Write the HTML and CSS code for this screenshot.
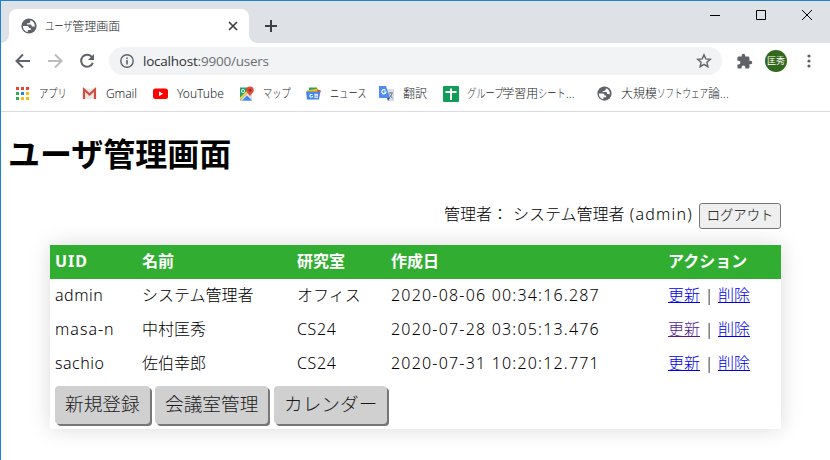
FILE: index.html
```html
<!DOCTYPE html>
<html lang="ja">
<head>
<meta charset="utf-8">
<title>ユーザ管理画面</title>
<link rel="stylesheet" href="styles.css">
</head>
<body>
<svg width="0" height="0" class="defs"><defs>
<symbol id="globe" viewBox="0 0 16 16"><circle cx="8" cy="8" r="7.6" fill="#5f6368"/><path d="M2 8.100h4.300c1.500 0 1.700 1 1.700 2h1.700v1.800H6.800v2.200C4 13.800 1.800 11.300 2 8.100zM9.300 2.300v1.200c0 1-.6 1.700-1.700 1.700H6v1.300h3.500c1 0 1.300 1 1.300 2h1.500c.8 0 1 .4 1.200.8.8-2.800-.6-6-4.200-7z" fill="#fff"/></symbol>
</defs></svg>
<div class="window">
  <header class="tabs">
    <div class="tab">
      <svg class="favicon"><use href="#globe"/></svg>
      <span class="title"><span class="kana k3">ユーザ</span>管理画面</span>
      <svg class="close" viewBox="0 0 10 10"><path d="M1 1l8 8M9 1L1 9" stroke="#3c4043" stroke-width="1.700"/></svg>
    </div>
    <svg class="plus" viewBox="0 0 12 12"><path d="M6 0v12M0 6h12" stroke="#3c4043" stroke-width="2"/></svg>
    <div class="controls">
      <svg viewBox="0 0 10 10"><path d="M0 5.500h10" stroke="#000"/></svg>
      <svg viewBox="0 0 10 10"><path d="M.5.5h9v9h-9z" stroke="#000" fill="none"/></svg>
      <svg viewBox="0 0 10 10"><path d="M0 0l10 10M10 0L0 10" stroke="#000"/></svg>
    </div>
  </header>
  <div class="toolbar">
    <svg class="nav" viewBox="0 0 16 16"><path d="M15 8H2M8 1.500L1.500 8 8 14.500" fill="none" stroke="#5f6368" stroke-width="2"/></svg>
    <svg class="nav" viewBox="0 0 16 16"><path d="M1 8h13M8 1.500L14.500 8 8 14.500" fill="none" stroke="#babcbe" stroke-width="2"/></svg>
    <svg class="nav" viewBox="0 0 16 16"><path d="M13 4.200A6 6 0 1 0 13.800 9.800" fill="none" stroke="#5f6368" stroke-width="2"/><path d="M15 1v6H9z" fill="#5f6368"/></svg>
    <div class="omnibox">
      <svg class="info" viewBox="0 0 14 14"><circle cx="7" cy="7" r="6.200" fill="none" stroke="#5f6368" stroke-width="1.400"/><path d="M7 6v4.500M7 3.400V5" stroke="#5f6368" stroke-width="1.600"/></svg>
      <span class="url"><b>localhost</b>:9900/users</span>
      <svg class="star" viewBox="0 0 16 16"><path d="M8 1.800l1.800 4.100 4.500.4-3.400 3 1 4.400L8 11.400l-3.900 2.300 1-4.400-3.400-3 4.500-.4z" fill="none" stroke="#5f6368" stroke-width="1.400"/></svg>
    </div>
    <svg class="ext" viewBox="0 0 24 24"><path d="M20.500 11H19V7c0-1.100-.9-2-2-2h-4V3.500a2.500 2.500 0 0 0-5 0V5H4c-1.100 0-2 .9-2 2v3.800h1.500a2.700 2.700 0 0 1 0 5.400H2V20c0 1.100.9 2 2 2h3.800v-1.500a2.700 2.700 0 0 1 5.400 0V22H17c1.100 0 2-.9 2-2v-4h1.500a2.500 2.500 0 0 0 0-5z" fill="#5f6368"/></svg>
    <span class="avatar">匡秀</span>
    <svg class="menu" viewBox="0 0 4 14"><g fill="#5f6368"><circle cx="2" cy="2" r="1.600"/><circle cx="2" cy="7" r="1.600"/><circle cx="2" cy="12" r="1.600"/></g></svg>
  </div>
  <nav class="bookmarks">
    <a class="bm b1"><svg viewBox="0 0 15 15"><path d="M1 1h3v3H1zM6 1h3v3H6zM11 1h3v3h-3z" fill="#ea4335"/><path d="M1 6h3v3H1zM1 11h3v3H1z" fill="#34a853"/><path d="M6 6h3v3H6z" fill="#1a88f0"/><path d="M11 6h3v3h-3zM6 11h3v3H6zM11 11h3v3h-3z" fill="#fbbc05"/></svg><span><span class="kana k3">アプリ</span></span></a>
    <a class="bm b2"><svg viewBox="0 0 15 15"><path d="M1 2.500h13V13H1z" fill="#e8e8e8"/><path d="M2 13V3.500l5.500 5 5.500-5V13" fill="none" stroke="#d54b3d" stroke-width="2.200"/></svg><span class="gmail">Gmail</span></a>
    <a class="bm b3"><svg viewBox="0 0 15 14"><rect y="2" width="15" height="10.500" rx="2.500" fill="#f00"/><path d="M6 5l4.200 2.300L6 9.500z" fill="#fff"/></svg><span>YouTube</span></a>
    <a class="bm b4"><svg viewBox="0 0 15 14"><path d="M1 1h12v13H1z" fill="#1fa463"/><path d="M1 14L13 2v12z" fill="#e0e0e0"/><path d="M3 14l5-5 5 5z" fill="#4285f4"/><path d="M1 12.500L11 2.500" stroke="#fdd147" stroke-width="1.800"/><circle cx="4" cy="4.500" r="1.600" fill="none" stroke="#fff"/><path d="M11 0a3.700 3.700 0 0 1 3.700 3.700c0 2.700-2.700 3.300-3.700 6.300-1-3-3.700-3.600-3.700-6.300A3.700 3.700 0 0 1 11 0z" fill="#e14a3b"/><circle cx="11" cy="3.700" r="1.200" fill="#802a25"/></svg><span><span class="kana k3">マップ</span></span></a>
    <a class="bm b5"><svg viewBox="0 0 15 14"><path d="M3 1h8v6H3z" fill="#26a65b"/><path d="M1 4l11-2 1 4H1z" fill="#fbbc05"/><path d="M11 3l4 1-2 6z" fill="#ea4335"/><path d="M0 5h14l-1 8H1z" fill="#4285f4"/><path d="M6.500 8H4v2.500h2.500V9.400M8.300 7.800H12M8.300 9.300H12M8.300 10.800H12" fill="none" stroke="#fff"/></svg><span><span class="kana k4">ニュース</span></span></a>
    <a class="bm b6"><svg viewBox="0 0 15 15"><path d="M6 3h9v12H9z" fill="#d9dce0"/><path d="M0 0h7l4 12H1q-1 0-1-1z" fill="#4d8bf5"/><path d="M8 12h3l-2 3z" fill="#3057ae"/><path d="M6.500 4.300A2.100 2.100 0 1 0 7 6H5" fill="none" stroke="#fff" stroke-width="1.200"/><path d="M10 7h4M12 6v1M13 7q0 3-3 5M10.500 8.500l3 4" fill="none" stroke="#72808e"/></svg><span>翻訳</span></a>
    <a class="bm b7"><svg viewBox="0 0 16 16"><rect width="16" height="16" rx="1" fill="#109d58"/><path d="M2.500 6h11M8 2.500v11.500" stroke="#fff" stroke-width="2"/></svg><span><span class="kana k4">グループ</span>学習用<span class="kana k3">シート</span>...</span></a>
    <a class="bm b8"><svg><use href="#globe"/></svg><span>大規模<span class="kana k6">ソフトウェア</span>論...</span></a>
  </nav>
  <main>
    <h1>ユーザ管理画面</h1>
    <div class="user"><span>管理者：</span><span class="who">システム管理者 <span class="adm">(admin)</span></span><button class="logout"><span>ログアウト</span></button></div>
    <section class="card">
      <table>
        <colgroup><col class="c1"><col class="c2"><col class="c3"><col class="c4"><col class="c5"></colgroup>
        <tr><th class="uid">UID</th><th>名前</th><th>研究室</th><th>作成日</th><th>アクション</th></tr>
        <tr><td class="id">admin</td><td>システム管理者</td><td>オフィス</td><td class="date">2020-08-06 00:34:16.287</td><td><a href="#u1">更新</a><i>|</i><a href="#d1">削除</a></td></tr>
        <tr><td class="id masa">masa-n</td><td>中村匡秀</td><td class="lab">CS24</td><td class="date">2020-07-28 03:05:13.476</td><td><a class="seen" href="#u2">更新</a><i>|</i><a href="#d2">削除</a></td></tr>
        <tr><td class="id">sachio</td><td>佐伯幸郎</td><td class="lab">CS24</td><td class="date">2020-07-31 10:20:12.771</td><td><a href="#u3">更新</a><i>|</i><a href="#d3">削除</a></td></tr>
      </table>
      <div class="actions"><a class="w1">新規登録</a><a class="w2">会議室管理</a><a class="w3">カレンダー</a></div>
    </section>
  </main>
</div>
</body>
</html>
```
FILE: styles.css
```css
* { box-sizing: border-box; }
body { margin: 0; background: #fff; color: #000; font: 300 16px/24px "Noto Sans", "Noto Sans CJK JP", sans-serif; }
svg { display: block; flex: none; }
.defs { position: absolute; }
.window { width: 830px; height: 460px; border: solid #1883d7; border-width: 1px 0 0 1px; overflow: hidden; }
.kana { display: inline-block; transform: scaleX(.77); transform-origin: left; }
.k3 { margin-right: -8.5px; }
.k4 { margin-right: -12px; }
.k6 { margin-right: -21px; transform: scaleX(.71); }

.tabs { display: flex; height: 42px; background: #dee1e6; }
.tab { position: relative; display: flex; align-items: center; width: 240px; height: 34px; margin: 8px 0 0 8px; padding: 0 11px 0 12px; background: #fff; border-radius: 8px 8px 0 0; }
.tab::before, .tab::after { content: ""; position: absolute; bottom: 0; width: 8px; height: 8px; }
.tab::before { left: -8px; background: radial-gradient(circle at 0 0, #dee1e6 7.5px, #fff 8px); }
.tab::after { right: -8px; background: radial-gradient(circle at 100% 0, #dee1e6 7.5px, #fff 8px); }
.favicon { width: 16px; height: 16px; }
.title { flex: 1; margin-left: 8px; padding-top: 1px; font-size: 12px; line-height: 18px; color: #202326; white-space: nowrap; }
.close { width: 10px; height: 10px; }
.plus { width: 12px; height: 12px; margin: 19px 0 0 16px; }
.controls { display: flex; gap: 36px; margin: 9px 18px 0 auto; }
.controls svg { width: 10px; height: 10px; }

.toolbar { display: flex; align-items: center; height: 36px; padding: 0 18px 0 14px; }
.nav { width: 16px; height: 16px; margin-right: 16px; }
.omnibox { display: flex; align-items: center; width: 613px; height: 28px; margin-left: -2px; padding: 0 10px 0 11px; border-radius: 14px; background: #f1f3f4; }
.info { width: 14px; height: 14px; }
.url { flex: 1; margin-left: 9px; font: 13.5px/20px "Open Sans", "Noto Sans", sans-serif; letter-spacing: -.22px; color: #6b6f73; }
.url b { font-weight: 400; color: #303236; }
.star { width: 16px; height: 16px; }
.ext { width: 17px; height: 17px; margin-left: 14px; }
.avatar { width: 22px; height: 22px; margin-left: 12px; border-radius: 50%; background: #33691e; color: #fff; font-size: 9px; font-weight: 400; line-height: 21px; text-align: center; }
.menu { width: 4px; height: 14px; margin-left: auto; margin-right: 1px; }

.bookmarks { display: flex; height: 33px; border-bottom: 1px solid #d9dbde; }
.bm { display: flex; align-items: center; flex: none; height: 29px; gap: 9px; font-size: 12px; line-height: 18px; color: #202326; white-space: nowrap; }
.bm svg { width: 15px; height: 15px; }
.b1 { width: 67px; margin-left: 14px; }
.b2 { width: 71px; }
.b2, .b3 { font-weight: 350; }
.gmail { letter-spacing: -.1px; }
.b3 { width: 86px; }
.b4 { width: 67px; }
.b5 { width: 73px; }
.b6 { width: 64px; }
.b7 { width: 154px; gap: 8px; }
.b7 svg { width: 16px; height: 16px; }

main { padding: 18px 0 0 7px; }
h1 { margin: 0; font-size: 32px; line-height: 48px; font-weight: 700; }
.user { display: flex; align-items: center; justify-content: flex-end; height: 26px; margin: 25px 49px 16px 0; white-space: nowrap; }
.user > span { padding-bottom: 4px; }
.who { width: 180px; margin-left: 5px; }
.adm { margin-left: 1px; letter-spacing: 1.25px; font-weight: 350; }
.logout { width: 82px; height: 26px; margin-left: 6px; padding: 0 0 2px; border: 1px solid #767676; border-radius: 3px; background: #efefef; color: #000; font: 300 13.33px/20px "Noto Sans", "Noto Sans CJK JP", sans-serif; }
.card { width: 731px; height: 184px; margin-left: 42px; background: #fff; box-shadow: 0 0 20px rgba(0, 0, 0, .15); }
table { width: 731px; table-layout: fixed; border-collapse: collapse; }
.c1 { width: 87px; }
.c2 { width: 155px; }
.c3 { width: 94px; }
.c4 { width: 277px; }
.c5 { width: 118px; }
th, td { height: 34px; padding: 0 0 3px 5px; text-align: left; white-space: nowrap; line-height: 24px; }
th { background: #31ae31; color: #fff; font-weight: 700; }
.uid { letter-spacing: 1px; }
.id { font-weight: 350; letter-spacing: .5px; }
.masa { letter-spacing: 1px; }
.lab { font-weight: 350; letter-spacing: .6px; }
.date { font-weight: 350; letter-spacing: 1.19px; }
td a { color: #00e; text-decoration: underline; }
td .seen { color: #551a8b; }
td i { display: inline-block; width: 18px; font-style: normal; text-align: center; }
.actions { display: flex; padding: 5px; gap: 6px; }
.actions a { height: 38px; padding-left: 10px; border-radius: 4px; box-shadow: 2px 2px 0 #777; background: #d0d0d0; color: #1a1a1a; font-size: 18.67px; line-height: 36px; white-space: nowrap; }
.w1 { width: 95px; margin-right: -1px; }
.w2 { width: 113px; }
.w3 { width: 113px; }
```
